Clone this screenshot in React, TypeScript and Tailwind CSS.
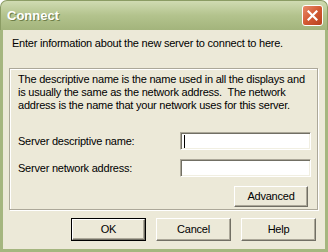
import React from 'react';

const face = 'bg-[#ECE9D8]';

const RaisedButton: React.FC<{ label: string; isDefault?: boolean; className?: string }> = ({ label, isDefault, className }) => {
  const inner = (
    <div className="h-full w-full border border-t-white border-l-white border-r-[#716F64] border-b-[#716F64] shadow-[inset_-1px_-1px_#ACA899] flex items-center justify-center text-black">
      {label}
    </div>
  );
  return (
    <div className={`${className ?? ''} ${face} ${isDefault ? 'border border-black' : ''}`}>
      {inner}
    </div>
  );
};

const TextBox: React.FC<{ caret?: boolean }> = ({ caret }) => (
  <div className="w-[131px] h-[18px] bg-white border border-t-[#ACA899] border-l-[#ACA899] border-b-white border-r-white shadow-[inset_1px_1px_#716F64,inset_-1px_-1px_#F1EFE2] flex items-center pl-[3px]">
    {caret && <div className="w-px h-[13px] bg-black" />}
  </div>
);

export default function App() {
  return (
    <div
      className="w-[328px] h-[252px] flex flex-col text-[11px] leading-[13px] tracking-[-0.22px] text-black whitespace-nowrap"
      style={{ fontFamily: '"Liberation Sans", Arial, sans-serif' }}
    >
      {/* title bar */}
      <div className="h-[30px] shrink-0 rounded-t-[7px] bg-gradient-to-b from-[#D0DBB2] via-[#B3C38D] to-[#A3B47C] border border-[#8B9C64] border-b-0 flex items-center justify-between pl-[6px] pr-[4px]">
        <span className="text-white font-bold text-[13px] [text-shadow:1px_1px_#6E7E48] tracking-[0px]">Connect</span>
        <div className="w-[21px] h-[21px] rounded-[3px] border border-white bg-gradient-to-br from-[#E88B6A] via-[#D35A33] to-[#B8421E] flex items-center justify-center">
          <svg width="11" height="11" viewBox="0 0 11 11">
            <path d="M1.5 1.5 L9.5 9.5 M9.5 1.5 L1.5 9.5" stroke="#fff" strokeWidth="2.2" strokeLinecap="square" />
          </svg>
        </div>
      </div>

      {/* client */}
      <div className={`flex-1 ${face} border-x-[3px] border-b-[3px] border-[#A5B67F] flex flex-col`}>
        <p className="pl-[9px] pt-[7px]">Enter information about the new server to connect to here.</p>

        <div className="ml-[6px] mt-[18px] w-[309px] h-[142px] shrink-0 border border-[#ACA899] shadow-[inset_1px_1px_#fff,1px_1px_#fff] flex flex-col pl-[8px] pt-[4px]">
          <p>
            The descriptive name is the name used in all the displays and
            <br />
            is usually the same as the network address.&nbsp; The network
            <br />
            address is the name that your network uses for this server.
          </p>
          <div className="mt-[20px] flex items-center justify-between pr-[6px]">
            <span>Server descriptive name:</span>
            <TextBox caret />
          </div>
          <div className="mt-[9px] flex items-center justify-between pr-[6px]">
            <span>Server network address:</span>
            <TextBox />
          </div>
          <div className="mt-[9px] flex justify-end pr-[9px]">
            <RaisedButton label="Advanced" className="w-[74px] h-[21px]" />
          </div>
        </div>

        <div className="mt-[8px] flex justify-end gap-[10px] pr-[9px]">
          <RaisedButton label="OK" isDefault className="w-[75px] h-[23px]" />
          <RaisedButton label="Cancel" className="w-[75px] h-[23px]" />
          <RaisedButton label="Help" className="w-[75px] h-[23px]" />
        </div>
      </div>
    </div>
  );
}
